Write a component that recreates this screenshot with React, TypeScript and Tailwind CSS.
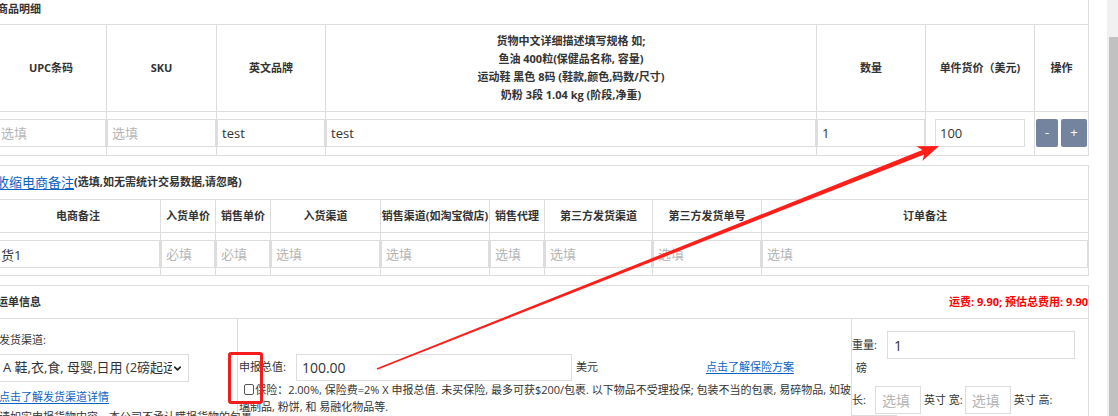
import { ChevronDown } from "lucide-react"

const inputCls =
  "h-[28px] w-full border border-[#ddd] bg-white px-[4px] text-[13px] text-[#333] outline-none placeholder:text-[#b5b5b5]"

function Field({ value, placeholder, className = "" }: { value?: string; placeholder?: string; className?: string }) {
  return <input readOnly defaultValue={value} placeholder={placeholder} className={`${inputCls} ${className}`} />
}

export default function App() {
  const goodsHead = ["UPC条码", "SKU", "英文品牌"]
  const noteHead = ["电商备注", "入货单价", "销售单价", "入货渠道", "销售渠道(如淘宝微店)", "销售代理", "第三方发货渠道", "第三方发货单号", "订单备注"]
  const noteRow: { v?: string; p?: string }[] = [
    { v: "货1" }, { p: "必填" }, { p: "必填" }, { p: "选填" }, { p: "选填" }, { p: "选填" }, { p: "选填" }, { p: "选填" }, { p: "选填" },
  ]

  return (
    <div className="flex h-[416px] w-[1118px] overflow-hidden bg-white font-['Open_Sans','Noto_Sans_CJK_SC',sans-serif] text-[11px] text-[#333]">
      <div className="relative flex-1 overflow-hidden">
        <div className="-ml-[5px] w-[1094px]">
          {/* 商品明细 */}
          <section className="border-x border-b border-[#ddd]">
            <div className="h-[24px] pl-[1px] text-[11px] font-bold leading-[17px]">商品明细</div>
            <div className="grid grid-cols-[111px_110px_109px_491px_109px_109px_53px] border-t border-[#ddd]">
              {goodsHead.map((h) => (
                <div key={h} className="flex h-[86px] items-center justify-center border-r border-[#ddd] font-bold">
                  {h}
                </div>
              ))}
              <div className="flex h-[86px] flex-col items-center justify-center border-r border-[#ddd] text-center font-bold leading-[18px]">
                <div>货物中文详细描述填写规格 如;</div>
                <div>鱼油 400粒(保健品名称, 容量)</div>
                <div>运动鞋 黑色 8码 (鞋款,颜色,码数/尺寸)</div>
                <div>奶粉 3段 1.04 kg (阶段,净重)</div>
              </div>
              <div className="flex h-[86px] items-center justify-center border-r border-[#ddd] font-bold">数量</div>
              <div className="flex h-[86px] items-center justify-center border-r border-[#ddd] font-bold">单件货价（美元)</div>
              <div className="flex h-[86px] items-center justify-center font-bold">操作</div>

              <div className="h-[44px] border-r border-t border-[#ddd] pt-[7px]"><Field placeholder="选填" /></div>
              <div className="h-[44px] border-r border-t border-[#ddd] pt-[7px]"><Field placeholder="选填" /></div>
              <div className="h-[44px] border-r border-t border-[#ddd] pt-[7px]"><Field value="test" /></div>
              <div className="h-[44px] border-r border-t border-[#ddd] pt-[7px]"><Field value="test" /></div>
              <div className="h-[44px] border-r border-t border-[#ddd] pt-[7px]"><Field value="1" /></div>
              <div className="h-[44px] border-r border-t border-[#ddd] px-[9px] pt-[7px]"><Field value="100" /></div>
              <div className="flex h-[44px] gap-[3px] border-t border-[#ddd] pl-[1px] pt-[7px]">
                <button className="h-[28px] w-[22px] rounded-[2px] bg-[#74849f] text-[13px] text-white">-</button>
                <button className="h-[28px] w-[26px] rounded-[2px] bg-[#74849f] text-[13px] text-white">+</button>
              </div>
            </div>
          </section>

          {/* 电商备注 */}
          <section className="mt-[9px] border border-[#ddd]">
            <div className="flex h-[33px] items-center whitespace-nowrap">
              <a className="text-[13px] text-[#0b63c5] underline underline-offset-2">收缩电商备注</a>
              <span className="font-bold">(选填,如无需统计交易数据,请忽略)</span>
            </div>
            <div className="grid grid-cols-[165px_55px_55px_110px_109px_55px_108px_109px_326px] border-t border-[#ddd]">
              {noteHead.map((h, i) => (
                <div
                  key={h}
                  className={`flex h-[32px] items-center justify-center whitespace-nowrap font-bold ${i < 8 ? "border-r border-[#ddd]" : ""}`}
                >
                  {h}
                </div>
              ))}
              {noteRow.map((c, i) => (
                <div key={i} className={`h-[43px] border-t border-[#ddd] pt-[7px] ${i < 8 ? "border-r" : ""}`}>
                  <Field value={c.v} placeholder={c.p} />
                </div>
              ))}
            </div>
          </section>

          {/* 运单信息 */}
          <section className="mt-[9px] border-x border-t border-[#ddd]">
            <div className="flex h-[33px] items-center justify-between border-b border-[#ddd] pl-[1px]">
              <span className="font-bold">运单信息</span>
              <span className="font-bold text-[#ff0000]">运费: 9.90; 预估总费用: 9.90</span>
            </div>
            <div className="grid h-[120px] grid-cols-[242px_614px_1fr]">
              <div className="border-r border-[#ddd] pt-[12px]">
                <div className="pl-[3px] leading-[17px]">发货渠道:</div>
                <div className="ml-[2px] mt-[6px] flex h-[28px] w-[191px] items-center border border-[#ddd] pl-[4px] pr-[5px]">
                  <span className="flex-1 overflow-hidden whitespace-nowrap text-[13px]">A 鞋,衣,食, 母婴,日用 (2磅起运)</span>
                  <ChevronDown size={11} strokeWidth={3.5} className="text-[#222]" />
                </div>
                <div className="mt-[5px] pl-[3px] leading-[20px]">
                  <a className="text-[#0b63c5] underline underline-offset-2">点击了解发货渠道详情</a>
                </div>
                <div className="whitespace-nowrap pl-[3px] leading-[20px]">请如实申报货物内容，本公司不承认瞒报货物的包裹</div>
              </div>

              <div className="border-r border-[#ddd] pt-[34px] pl-[1px]">
                <div className="flex h-[28px] items-center whitespace-nowrap">
                  <span>申报总值:</span>
                  <input readOnly defaultValue="100.00" className="ml-[10px] h-[27px] w-[276px] border border-[#ddd] px-[5px] text-[14px] outline-none" />
                  <span className="ml-[4px]">美元</span>
                  <a className="ml-[108px] text-[#0b63c5] underline underline-offset-2">点击了解保险方案</a>
                </div>
                <div className="leading-[17px]">
                  <div className="flex items-center whitespace-nowrap">
                    <span className="ml-[5px] mr-[1px] inline-block h-[11px] w-[11px] rounded-[2px] border border-[#555]" />
                    <span>保险：2.00%, 保险费=2% X 申报总值. 未买保险, 最多可获$200/包裹. 以下物品不受理投保; 包装不当的包裹, 易碎物品, 如玻</span>
                  </div>
                  <div>璃制品, 粉饼, 和 易融化物品等.</div>
                </div>
              </div>

              <div className="pt-[12px]">
                <div className="flex h-[28px] items-center">
                  <span>重量:</span>
                  <input readOnly defaultValue="1" className="ml-[10px] h-[28px] w-[188px] border border-[#ddd] px-[6px] text-[14px] outline-none" />
                </div>
                <div className="h-[18px] pl-[4px] leading-[18px]">磅</div>
                <div className="mt-[9px] flex h-[28px] items-center whitespace-nowrap">
                  <span>长:</span>
                  <input readOnly placeholder="选填" className="ml-[9px] h-[28px] w-[46px] border border-[#ddd] px-[6px] text-[14px] outline-none placeholder:text-[#b5b5b5]" />
                  <span className="ml-[3px]">英寸 宽:</span>
                  <input readOnly placeholder="选填" className="ml-[2px] h-[28px] w-[46px] border border-[#ddd] px-[6px] text-[14px] outline-none placeholder:text-[#b5b5b5]" />
                  <span className="ml-[3px]">英寸 高:</span>
                </div>
                <input readOnly className="mt-[1px] h-[28px] w-[45px] border border-[#ddd] outline-none" />
              </div>
            </div>
          </section>
        </div>

        {/* annotations */}
        <svg className="pointer-events-none absolute left-0 top-0" width="1107" height="416" viewBox="0 0 1107 416">
          <polygon
            fill="#ff1f1a"
            points="376.7,368.3 922.3,150 916.5,146.3 939,146 922.4,161.1 924.1,154.6 377.3,369.7"
          />
        </svg>
        <div className="pointer-events-none absolute left-[228px] top-[352px] h-[52px] w-[35px] rounded-[3px] border-[3px] border-[#f51c1c]" />
      </div>

      <div className="flex w-[11px] flex-col bg-[#f1f1f1]">
        <div className="h-[37px]" />
        <div className="ml-[2px] flex-1 bg-[#c1c1c1]" />
      </div>
    </div>
  )
}
